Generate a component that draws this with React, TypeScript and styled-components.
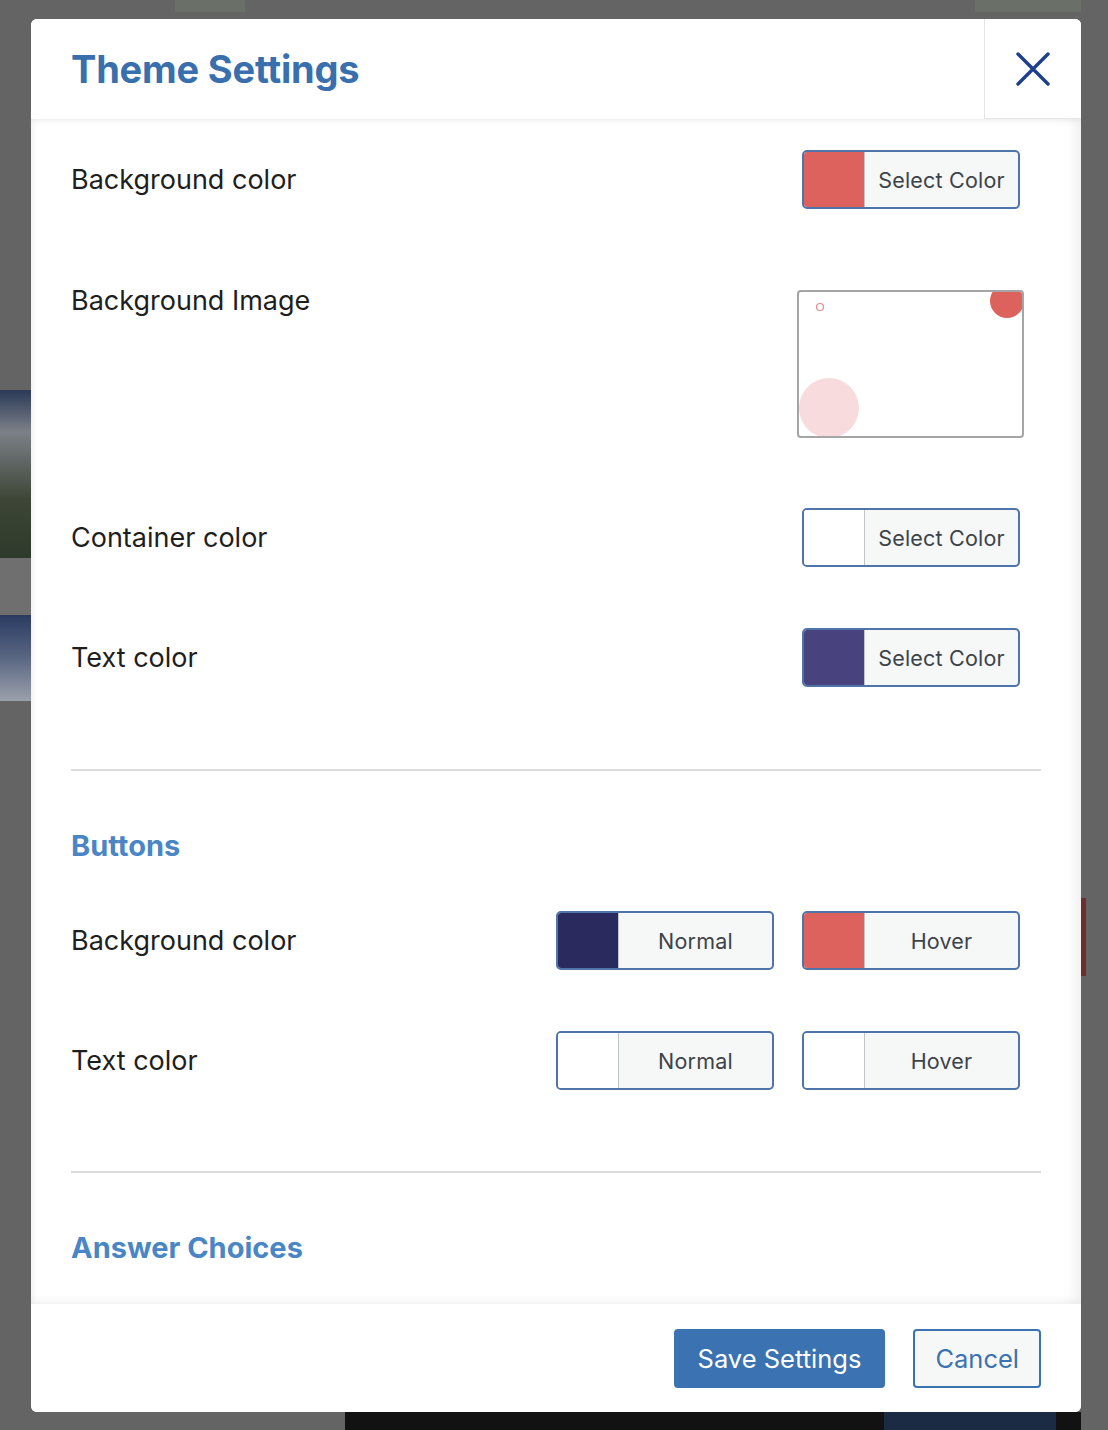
import React from 'react';
import styled, { createGlobalStyle } from 'styled-components';

const GlobalStyle = createGlobalStyle`
  body {
    margin: 0;
    font-family: Inter, 'Noto Sans', 'Liberation Sans', sans-serif;
  }
`;

const Page = styled.div`
  box-sizing: border-box;
  width: 1108px;
  height: 1430px;
  padding: 19px 27px 18px 31px;
  background:
    linear-gradient(#121212, #121212) 345px 1412px / 539px 18px no-repeat,
    linear-gradient(#1b2b44, #1b2b44) 884px 1412px / 172px 18px no-repeat,
    linear-gradient(#121212, #121212) 1056px 1412px / 25px 18px no-repeat,
    linear-gradient(#6b2d30, #6b2d30) 1081px 898px / 5px 78px no-repeat,
    linear-gradient(#2b3a58 0%, #7c8088 25%, #3d4636 65%, #2f3a2c 100%) 0 390px / 31px 168px no-repeat,
    linear-gradient(#6f6f6f, #6f6f6f) 0 558px / 31px 57px no-repeat,
    linear-gradient(#2a3b62 0%, #5a6782 50%, #9ba1ab 100%) 0 615px / 31px 86px no-repeat,
    linear-gradient(#6a6f68, #6a6f68) 175px 0 / 70px 12px no-repeat,
    linear-gradient(#6a6f68, #6a6f68) 975px 0 / 106px 12px no-repeat,
    #646464;
`;

const Modal = styled.div`
  display: flex;
  flex-direction: column;
  width: 1050px;
  height: 1393px;
  background: #fff;
  border-radius: 6px;
  overflow: hidden;
`;

const Header = styled.header`
  position: relative;
  z-index: 1;
  display: flex;
  height: 100px;
  flex-shrink: 0;
  background: #fff;
  box-shadow: 0 2px 6px rgba(0, 0, 0, 0.07);
`;

const Title = styled.h1`
  flex: 1;
  display: flex;
  align-items: center;
  margin: 0;
  padding-left: 40px;
  font-size: 38px;
  font-weight: 700;
  letter-spacing: -0.2px;
  color: #3a6fae;
`;

const CloseButton = styled.button`
  display: flex;
  align-items: center;
  justify-content: center;
  width: 97px;
  padding: 0;
  background: #fff;
  border: none;
  border-left: 1px solid #e4e5e7;
  border-bottom: 1px solid #e6e6e6;
  cursor: pointer;
`;

const Body = styled.div`
  flex: 1;
  overflow: hidden;
  padding: 31px 40px 0 40px;
  box-shadow: inset 8px 0 10px -9px rgba(0, 0, 0, 0.12),
    inset -16px 0 16px -12px rgba(0, 0, 0, 0.08);
`;

const Row = styled.div<{ $top?: number; $align?: string }>`
  display: flex;
  align-items: ${(p) => p.$align || 'center'};
  justify-content: space-between;
  margin-top: ${(p) => p.$top || 0}px;
`;

const Label = styled.span<{ $lineHeight?: number }>`
  font-size: 27px;
  line-height: ${(p) => p.$lineHeight || 30}px;
  color: #1e1e1e;
`;

const Controls = styled.div`
  display: flex;
  gap: 28px;
  margin-right: 21px;
`;

const ColorButton = styled.button`
  box-sizing: border-box;
  display: flex;
  width: 218px;
  height: 59px;
  padding: 0;
  background: #f6f7f7;
  border: 2px solid #4f74a9;
  border-radius: 5px;
  overflow: hidden;
  font-family: inherit;
  cursor: pointer;
`;

const Swatch = styled.span<{ $color: string }>`
  width: 60px;
  flex-shrink: 0;
  background: ${(p) => p.$color};
  border-right: 1px solid #c3c4c7;
`;

const ButtonText = styled.span`
  flex: 1;
  display: flex;
  align-items: center;
  justify-content: center;
  font-size: 21.5px;
  letter-spacing: 0.2px;
  color: #3c434a;
`;

const ImagePreview = styled.div`
  box-sizing: border-box;
  width: 227px;
  height: 148px;
  margin-right: 17px;
  border: 2px solid #a5a5a5;
  border-radius: 4px;
  overflow: hidden;
  background: #fff;

  svg {
    display: block;
  }
`;

const Divider = styled.hr<{ $top: number }>`
  height: 2px;
  margin: ${(p) => p.$top}px 0 0;
  border: none;
  background: #dcdcde;
`;

const SectionTitle = styled.h2<{ $top: number }>`
  margin: ${(p) => p.$top}px 0 0;
  font-size: 29px;
  line-height: 34px;
  font-weight: 700;
  color: #4a86c6;
`;

const Footer = styled.footer`
  position: relative;
  z-index: 1;
  display: flex;
  align-items: center;
  justify-content: flex-end;
  gap: 28px;
  height: 108px;
  flex-shrink: 0;
  padding-right: 40px;
  background: #fff;
  box-shadow: 0 -3px 8px rgba(0, 0, 0, 0.06);
`;

const FooterButton = styled.button<{ $primary?: boolean }>`
  box-sizing: border-box;
  height: 59px;
  padding: 0 ${(p) => (p.$primary ? 22 : 20)}px;
  font-family: inherit;
  font-size: 25.5px;
  border-radius: 4px;
  border: 2px solid #3b72b1;
  background: ${(p) => (p.$primary ? '#3b72b1' : '#f6f7f7')};
  color: ${(p) => (p.$primary ? '#fff' : '#3b72b1')};
  cursor: pointer;
`;

const ColorPicker: React.FC<{ color: string; text: string }> = ({ color, text }) => (
  <ColorButton>
    <Swatch $color={color} />
    <ButtonText>{text}</ButtonText>
  </ColorButton>
);

const App: React.FC = () => (
  <>
    <GlobalStyle />
    <Page>
      <Modal>
        <Header>
          <Title>Theme Settings</Title>
          <CloseButton aria-label="Close">
            <svg width="34" height="34" viewBox="0 0 34 34">
              <path
                d="M2 2 L32 32 M32 2 L2 32"
                stroke="#1d3f8f"
                strokeWidth="3.4"
                strokeLinecap="round"
              />
            </svg>
          </CloseButton>
        </Header>

        <Body>
          <Row>
            <Label>Background color</Label>
            <Controls>
              <ColorPicker color="#dd615c" text="Select Color" />
            </Controls>
          </Row>

          <Row $top={81} $align="flex-start">
            <Label $lineHeight={22}>Background Image</Label>
            <ImagePreview>
              <svg width="223" height="144" viewBox="0 0 223 144">
                <circle cx="21" cy="15" r="3.5" fill="none" stroke="#e48c8c" strokeWidth="1.2" />
                <circle cx="208" cy="9" r="17" fill="#dd615c" />
                <circle cx="30" cy="116" r="30" fill="#f8dcdd" />
              </svg>
            </ImagePreview>
          </Row>

          <Row $top={70}>
            <Label>Container color</Label>
            <Controls>
              <ColorPicker color="#ffffff" text="Select Color" />
            </Controls>
          </Row>

          <Row $top={61}>
            <Label>Text color</Label>
            <Controls>
              <ColorPicker color="#48437e" text="Select Color" />
            </Controls>
          </Row>

          <Divider $top={82} />

          <SectionTitle $top={58}>Buttons</SectionTitle>

          <Row $top={48}>
            <Label>Background color</Label>
            <Controls>
              <ColorPicker color="#2a2a5f" text="Normal" />
              <ColorPicker color="#dd615c" text="Hover" />
            </Controls>
          </Row>

          <Row $top={61}>
            <Label>Text color</Label>
            <Controls>
              <ColorPicker color="#ffffff" text="Normal" />
              <ColorPicker color="#ffffff" text="Hover" />
            </Controls>
          </Row>

          <Divider $top={81} />

          <SectionTitle $top={58}>Answer Choices</SectionTitle>
        </Body>

        <Footer>
          <FooterButton $primary>Save Settings</FooterButton>
          <FooterButton>Cancel</FooterButton>
        </Footer>
      </Modal>
    </Page>
  </>
);

export default App;
